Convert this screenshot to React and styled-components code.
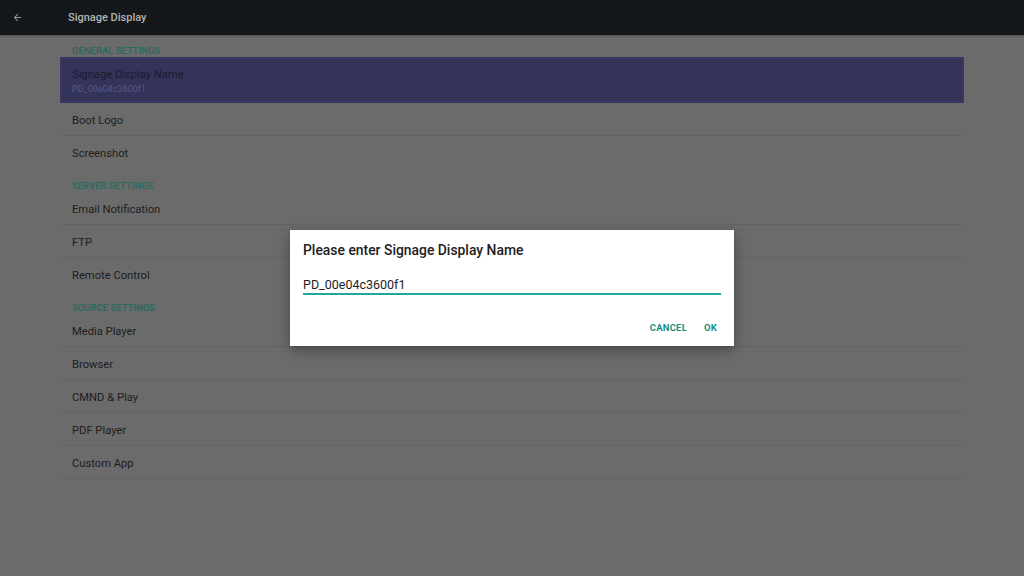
import React from "react";
import styled, { createGlobalStyle } from "styled-components";

const Global = createGlobalStyle`
  html, body { margin: 0; padding: 0; }
  body {
    width: 1024px;
    height: 576px;
    overflow: hidden;
    background: #6b6b6b;
    font-family: Roboto, "Noto Sans", "Liberation Sans", sans-serif;
  }
`;

const Screen = styled.div`
  position: relative;
  width: 1024px;
  height: 576px;
  background: #6b6b6b;
`;

const TopBar = styled.div`
  height: 35px;
  background: #15181a;
  display: flex;
  align-items: center;
  box-shadow: 0 1px 2px rgba(0, 0, 0, 0.3);
`;

const BackButton = styled.div`
  width: 34px;
  display: flex;
  justify-content: center;
  color: #9a9a9a;
`;

const Title = styled.span`
  margin-left: 34px;
  color: #b3b3b3;
  font-size: 11px;
  font-weight: 500;
`;

const List = styled.div`
  margin: 0 60px;
`;

const Header = styled.div`
  height: ${p => (p.first ? 22 : 23)}px;
  display: flex;
  align-items: flex-end;
  padding: 0 12px 1px;
  box-sizing: border-box;
  color: #266a60;
  font-size: 9.5px;
  font-weight: 500;
  text-transform: uppercase;
`;

const Row = styled.div`
  height: ${p => (p.selected ? 46 : 33)}px;
  box-sizing: border-box;
  padding: ${p => (p.selected ? "3px 10px 0" : "2px 12px 0")};
  display: flex;
  flex-direction: column;
  justify-content: center;
  background: ${p => (p.selected ? "#34335a" : "transparent")};
  border: ${p => (p.selected ? "2px solid #3a3867" : "none")};
  border-bottom: ${p =>
    p.selected ? "2px solid #3a3867" : p.divider ? "1px solid #636363" : "1px solid transparent"};
`;

const RowTitle = styled.span`
  color: ${p => (p.selected ? "#1c1b2e" : "#1d1d1d")};
  font-size: 11.2px;
  line-height: 15px;
`;

const RowSub = styled.span`
  color: #5a5884;
  font-size: 9px;
  line-height: 15px;
`;

const Scrim = styled.div`
  position: absolute;
  inset: 0;
  display: flex;
  align-items: center;
  justify-content: center;
`;

const Dialog = styled.div`
  width: 444px;
  height: 116px;
  box-sizing: border-box;
  background: #ffffff;
  box-shadow: 0 4px 12px rgba(0, 0, 0, 0.35);
  padding: 11px 13px 0;
  display: flex;
  flex-direction: column;
`;

const DialogTitle = styled.div`
  color: #212121;
  font-size: 13.9px;
  font-weight: 500;
  line-height: 18px;
`;

const Field = styled.div`
  margin-top: 18px;
  border-bottom: 2px solid #1fa89c;
  padding-bottom: 0;
  color: #1e1e1e;
  font-size: 12.5px;
  line-height: 16px;
`;

const Actions = styled.div`
  margin-top: 27px;
  display: flex;
  justify-content: flex-end;
  gap: 17px;
  padding-right: 4px;
`;

const ActionButton = styled.span`
  color: #188f84;
  font-size: 9.5px;
  font-weight: 700;
  letter-spacing: 0.2px;
`;

const sections = [
  {
    title: "General Settings",
    items: [
      { name: "Signage Display Name", sub: "PD_00e04c3600f1", selected: true },
      { name: "Boot Logo" },
      { name: "Screenshot" },
    ],
  },
  {
    title: "Server Settings",
    items: [{ name: "Email Notification" }, { name: "FTP" }, { name: "Remote Control" }],
  },
  {
    title: "Source Settings",
    items: [
      { name: "Media Player" },
      { name: "Browser" },
      { name: "CMND & Play" },
      { name: "PDF Player" },
      { name: "Custom App" },
    ],
  },
];

const App = () => {
  return (
    <Screen>
      <Global />
      <TopBar>
        <BackButton>
          <svg width="11" height="11" viewBox="0 0 24 24" fill="currentColor">
            <path d="M20 11H7.83l5.59-5.59L12 4l-8 8 8 8 1.41-1.41L7.83 13H20v-2z" />
          </svg>
        </BackButton>
        <Title>Signage Display</Title>
      </TopBar>
      <List>
        {sections.map((s, si) => (
          <React.Fragment key={s.title}>
            <Header first={si === 0}>{s.title}</Header>
            {s.items.map((it, i) => (
              <Row
                key={it.name}
                selected={it.selected}
                divider={!it.selected && (i < s.items.length - 1 || si === sections.length - 1)}
              >
                <RowTitle selected={it.selected}>{it.name}</RowTitle>
                {it.sub && <RowSub>{it.sub}</RowSub>}
              </Row>
            ))}
          </React.Fragment>
        ))}
      </List>
      <Scrim>
        <Dialog>
          <DialogTitle>Please enter Signage Display Name</DialogTitle>
          <Field>PD_00e04c3600f1</Field>
          <Actions>
            <ActionButton>CANCEL</ActionButton>
            <ActionButton>OK</ActionButton>
          </Actions>
        </Dialog>
      </Scrim>
    </Screen>
  );
};

export default App;
